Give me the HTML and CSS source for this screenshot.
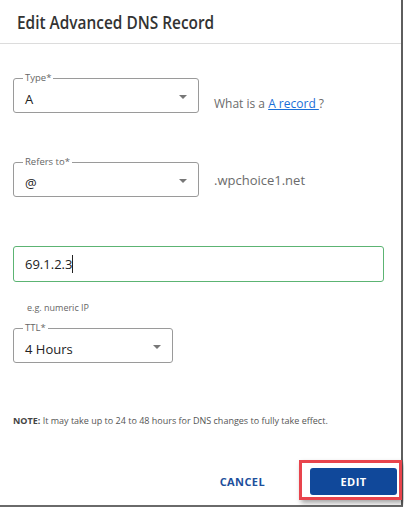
FILE: index.html
```html
<!DOCTYPE html>
<html>
<head>
<meta charset="utf-8">
<link rel="stylesheet" href="styles.css">
</head>
<body>
<div class="dialog">
  <div class="header"><h1 class="title">Edit Advanced DNS Record</h1></div>
  <div class="content">
    <div class="row row-type">
      <div class="select select-wide">
        <span class="float-label">Type*</span>
        <span class="value">A</span>
        <span class="arrow"></span>
      </div>
      <div class="aside aside-low">What is a <a class="link" href="#">A record </a>?</div>
    </div>
    <div class="row row-refers">
      <div class="select select-wide">
        <span class="float-label">Refers to*</span>
        <span class="value">@</span>
        <span class="arrow"></span>
      </div>
      <div class="aside">.wpchoice1.net</div>
    </div>
    <div class="ip-input"><span class="value caret">69.1.2.3</span></div>
    <div class="hint">e.g. numeric IP</div>
    <div class="select select-ttl">
      <span class="float-label">TTL*</span>
      <span class="value">4 Hours</span>
      <span class="arrow"></span>
    </div>
    <p class="note"><b>NOTE:</b> It may take up to 24 to 48 hours for DNS changes to fully take effect.</p>
  </div>
  <div class="footer">
    <button class="btn-cancel">CANCEL</button>
    <div class="edit-wrap">
      <button class="btn-edit">EDIT</button>
      <span class="highlight"></span>
    </div>
  </div>
</div>
</body>
</html>
```
FILE: styles.css
```css
html, body {
  margin: 0;
  padding: 0;
  background: #ffffff;
}
body {
  font-family: "Open Sans", "Noto Sans", sans-serif;
  color: #222;
}
.dialog {
  width: 401px;
  height: 505px;
  border-right: 2px solid #5e5e5e;
  border-bottom: 2px solid #6a6a6a;
  background: #fff;
  position: relative;
}
.header {
  height: 43px;
  border-bottom: 1px solid #dcdcdc;
  display: flex;
  align-items: center;
  padding-left: 17px;
}
.title {
  margin: 0;
  font-size: 17.5px;
  font-weight: 600;
  color: #333;
  white-space: nowrap;
  transform: scaleX(0.88);
  transform-origin: left center;
}
.content {
  padding: 0 13px;
}
.row {
  display: flex;
  align-items: center;
}
.row-type {
  margin-top: 34px;
}
.row-refers {
  margin-top: 49px;
}
.select {
  position: relative;
  height: 35px;
  box-sizing: border-box;
  border: 1px solid #9a9a9a;
  border-radius: 3px;
  display: flex;
  align-items: center;
  padding: 6px 11px 0 11px;
}
.select-wide {
  width: 186px;
}
.select-ttl {
  width: 160px;
  margin-top: 14px;
}
.float-label {
  position: absolute;
  left: 9px;
  top: -7px;
  padding: 0 2px;
  background: #fff;
  font-size: 9.5px;
  line-height: 12px;
  color: #666;
}
.value {
  font-size: 13px;
  color: #222;
  line-height: 18px;
}
.arrow {
  margin-left: auto;
  margin-right: 0;
  width: 0;
  height: 0;
  border-left: 4px solid transparent;
  border-right: 4px solid transparent;
  border-top: 4px solid #777;
  position: relative;
  top: -2px;
}
.aside {
  margin-left: 15px;
  font-size: 13px;
  color: #6b6b6b;
}
.aside-low {
  position: relative;
  top: 8px;
  font-size: 12px;
}
.link {
  color: #1a6fd8;
  text-decoration: underline;
}
.ip-input {
  margin-top: 49px;
  width: 371px;
  height: 36px;
  box-sizing: border-box;
  border: 1px solid #5cb473;
  border-radius: 3px;
  display: flex;
  align-items: center;
  padding-left: 11px;
}
.caret {
  border-right: 1px solid #222;
}
.hint {
  margin-top: 19px;
  padding-left: 14px;
  font-size: 9px;
  color: #666;
  line-height: 13px;
}
.note {
  margin: 52px 0 0 0;
  font-size: 9px;
  color: #555;
  line-height: 12px;
}
.note b {
  color: #444;
}
.footer {
  display: flex;
  justify-content: flex-end;
  align-items: center;
  margin-top: 41px;
  padding-right: 4px;
}
.btn-cancel {
  background: none;
  border: none;
  padding: 0;
  font-family: "Open Sans", sans-serif;
  font-weight: 700;
  font-size: 11px;
  letter-spacing: 0.4px;
  color: #1d4f9c;
  margin-right: 45px;
}
.edit-wrap {
  position: relative;
  display: flex;
}
.btn-edit {
  width: 87px;
  height: 27px;
  border: none;
  border-radius: 3px;
  background: #10489a;
  color: #fff;
  font-family: "Open Sans", sans-serif;
  font-weight: 700;
  font-size: 11px;
  letter-spacing: 0.4px;
}
.highlight {
  position: absolute;
  left: -11px;
  top: -8px;
  width: 97px;
  height: 34px;
  border: 3px solid #e8444c;
  box-shadow: 2px 3px 5px rgba(0,0,0,0.35);
  z-index: 2;
}
```
